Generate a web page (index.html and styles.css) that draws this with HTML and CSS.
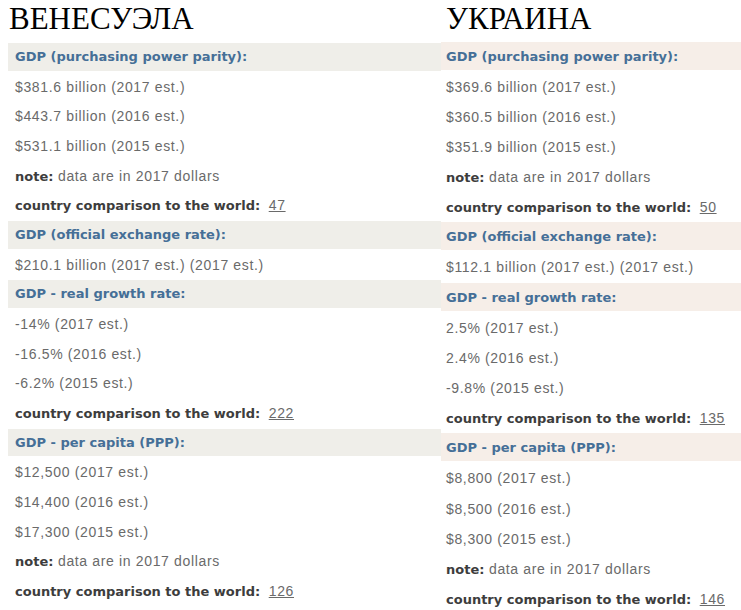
FILE: index.html
```html
<!DOCTYPE html>
<html lang="ru">
<head>
<meta charset="utf-8">
<title>GDP: Венесуэла и Украина</title>
<link rel="stylesheet" href="styles.css">
</head>
<body>
<main class="page">
  <section class="country country-left">
    <h1 class="title">ВЕНЕСУЭЛА</h1>
    <h2 class="head">GDP (purchasing power parity):</h2>
    <p class="row">$381.6 billion (2017 est.)</p>
    <p class="row">$443.7 billion (2016 est.)</p>
    <p class="row">$531.1 billion (2015 est.)</p>
    <p class="row"><b class="label">note:</b> data are in 2017 dollars</p>
    <p class="row"><b class="label">country comparison to the world:</b> <a class="rank" href="#">47</a></p>
    <h2 class="head">GDP (official exchange rate):</h2>
    <p class="row">$210.1 billion (2017 est.) (2017 est.)</p>
    <h2 class="head">GDP - real growth rate:</h2>
    <p class="row">-14% (2017 est.)</p>
    <p class="row">-16.5% (2016 est.)</p>
    <p class="row">-6.2% (2015 est.)</p>
    <p class="row"><b class="label">country comparison to the world:</b> <a class="rank" href="#">222</a></p>
    <h2 class="head">GDP - per capita (PPP):</h2>
    <p class="row">$12,500 (2017 est.)</p>
    <p class="row">$14,400 (2016 est.)</p>
    <p class="row">$17,300 (2015 est.)</p>
    <p class="row"><b class="label">note:</b> data are in 2017 dollars</p>
    <p class="row"><b class="label">country comparison to the world:</b> <a class="rank" href="#">126</a></p>
  </section>
  <section class="country country-right">
    <h1 class="title">УКРАИНА</h1>
    <h2 class="head">GDP (purchasing power parity):</h2>
    <p class="row">$369.6 billion (2017 est.)</p>
    <p class="row">$360.5 billion (2016 est.)</p>
    <p class="row">$351.9 billion (2015 est.)</p>
    <p class="row"><b class="label">note:</b> data are in 2017 dollars</p>
    <p class="row"><b class="label">country comparison to the world:</b> <a class="rank" href="#">50</a></p>
    <h2 class="head">GDP (official exchange rate):</h2>
    <p class="row">$112.1 billion (2017 est.) (2017 est.)</p>
    <h2 class="head">GDP - real growth rate:</h2>
    <p class="row">2.5% (2017 est.)</p>
    <p class="row">2.4% (2016 est.)</p>
    <p class="row">-9.8% (2015 est.)</p>
    <p class="row"><b class="label">country comparison to the world:</b> <a class="rank" href="#">135</a></p>
    <h2 class="head">GDP - per capita (PPP):</h2>
    <p class="row">$8,800 (2017 est.)</p>
    <p class="row">$8,500 (2016 est.)</p>
    <p class="row">$8,300 (2015 est.)</p>
    <p class="row"><b class="label">note:</b> data are in 2017 dollars</p>
    <p class="row"><b class="label">country comparison to the world:</b> <a class="rank" href="#">146</a></p>
  </section>
</main>
</body>
</html>
```

FILE: styles.css
```css
html, body {
  margin: 0;
  padding: 0;
  background: #ffffff;
}

.page {
  display: flex;
  width: 741px;
  height: 610px;
  overflow: hidden;
}

.country {
  display: flex;
  flex-direction: column;
  flex: none;
}

.country-left {
  --row: 29.67px;
  --band: #efeee9;
  --pad: 7px;
  margin-left: 8px;
  width: 433px;
}

.country-left .title {
  height: 43px;
  flex: none;
  padding-left: 1px;
}

.country-right {
  --row: 30.15px;
  --band: #f6eee8;
  --pad: 5px;
  width: 300px;
}

.country-right .title {
  height: 41.5px;
  flex: none;
  padding-left: 5px;
}

.title {
  margin: 0;
  font-family: "Liberation Serif", "Times New Roman", serif;
  font-weight: normal;
  font-size: 31px;
  line-height: 38px;
  color: #000000;
  box-sizing: border-box;
}

.head {
  margin: 0 0 2px 0;
  flex: none;
  height: calc(var(--row) - 2px);
  line-height: calc(var(--row) - 1px);
  padding-left: var(--pad);
  background: var(--band);
  font-family: "DejaVu Sans", Verdana, sans-serif;
  font-weight: bold;
  font-size: 13px;
  color: #456f97;
  white-space: nowrap;
}

.row {
  margin: 0;
  flex: none;
  height: var(--row);
  line-height: var(--row);
  padding-left: var(--pad);
  font-family: "Liberation Sans", Arial, sans-serif;
  font-size: 14px;
  letter-spacing: 0.65px;
  color: #6a6a6a;
  white-space: nowrap;
}

.label {
  font-family: "DejaVu Sans", Verdana, sans-serif;
  font-weight: bold;
  font-size: 13px;
  letter-spacing: 0;
  color: #3d3d3d;
}

.rank {
  margin-left: 4px;
  color: #6a6a6a;
  text-decoration: underline;
}
```
